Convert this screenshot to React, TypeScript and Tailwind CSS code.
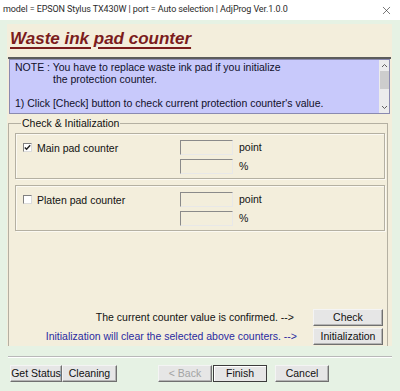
import { X } from "lucide-react";

const font = "font-['Liberation_Sans',Arial,sans-serif]";

function WinButton({ label, width, isDefault, disabled }: { label: string; width: string; isDefault?: boolean; disabled?: boolean }) {
  return (
    <button
      className={`${width} h-[17px] flex items-center justify-center whitespace-nowrap bg-[#e6e6e6] text-[10.5px] leading-none border ${
        isDefault
          ? "border-[#3c3c3c] shadow-[inset_1px_1px_0_#fff]"
          : "border-t-[#f4f4f4] border-l-[#f4f4f4] border-r-[#707070] border-b-[#707070] shadow-[inset_-1px_-1px_0_#b4b4b4]"
      } ${disabled ? "text-[#a3a3a3]" : "text-[#111]"}`}
    >
      {label}
    </button>
  );
}

function Field() {
  return (
    <div className="w-[53px] h-[15px] bg-[#f3eedc] border border-t-[#8a8a8a] border-l-[#8a8a8a] border-r-[#e8e8e8] border-b-[#e8e8e8]" />
  );
}

function CounterBox({ label, checked }: { label: string; checked?: boolean }) {
  return (
    <div className="h-[46px] flex border border-[#b4b0a2] shadow-[inset_1px_1px_0_#fbf9f2,1px_1px_0_#fbf9f2]">
      <div className="w-[164px] flex items-start pt-[8px] pl-[7px] gap-[5px]">
        <div className="w-[9px] h-[9px] mt-[1px] bg-white border border-t-[#808080] border-l-[#808080] border-r-[#dcdcdc] border-b-[#dcdcdc] flex items-center justify-center">
          {checked && (
            <svg width="7" height="7" viewBox="0 0 7 7">
              <path d="M0.8 3.4 L2.6 5.3 L6.2 1.2" fill="none" stroke="#222" strokeWidth="1.4" />
            </svg>
          )}
        </div>
        <span className="text-[10.5px] leading-[12px] text-[#111]">{label}</span>
      </div>
      <div className="flex flex-col gap-[3px] pt-[6px]">
        <div className="flex items-center gap-[6px]">
          <Field />
          <span className="text-[10.5px] text-[#111]">point</span>
        </div>
        <div className="flex items-center gap-[6px]">
          <Field />
          <span className="text-[10.5px] text-[#111]">%</span>
        </div>
      </div>
    </div>
  );
}

export default function App() {
  return (
    <div className={`w-[400px] h-[391px] flex flex-col bg-[#e6f2e4] ${font} overflow-hidden`}>
      <div className="h-[20px] shrink-0 bg-white flex items-center justify-between pl-[3px] pr-[7px]">
        <span className="font-['Roboto',sans-serif] text-[9px] tracking-[-0.1px] text-[#2b2b2b]">
          model = EPSON Stylus TX430W | port = Auto selection | AdjProg Ver.1.0.0
        </span>
        <X size={13} strokeWidth={1.2} color="#333" />
      </div>

      <div className="flex flex-col pt-[4px] px-[7px] pr-[8px]">
        <div className="h-[322px] bg-[#f3eedc] flex flex-col">
          <div className="h-[33px] pl-[3px] pt-[3px]">
            <span className="text-[17px] leading-[20px] font-bold italic text-[#7b1c1c] underline decoration-2 underline-offset-[3px]">
              Waste ink pad counter
            </span>
          </div>
          <div className="h-[2px] mx-[1px] bg-[#5c5c5c]" />
          <div className="h-[55px] mx-[2px] flex border border-[#8a8ab0] bg-[#c8c9fb]">
            <div className="flex-1 pl-[5px] pt-[1px] text-[10.5px] leading-[12px] text-[#10102a]">
              <div>NOTE : You have to replace waste ink pad if you initialize</div>
              <div className="pl-[38px]">the protection counter.</div>
              <div>&nbsp;</div>
              <div>1) Click [Check] button to check current protection counter's value.</div>
            </div>
            <div className="w-[10px] bg-[#ececec] flex flex-col items-center">
              <svg width="7" height="10" viewBox="0 0 7 10" className="mt-[1px]">
                <path d="M1 6 L3.5 3.5 L6 6" fill="none" stroke="#606060" strokeWidth="1" />
              </svg>
              <div className="w-[9px] h-[18px] bg-[#cdcdcd]" />
              <div className="flex-1" />
              <svg width="7" height="10" viewBox="0 0 7 10" className="mb-[1px]">
                <path d="M1 4 L3.5 6.5 L6 4" fill="none" stroke="#606060" strokeWidth="1" />
              </svg>
            </div>
          </div>

          <fieldset className="flex-1 mt-[3px] ml-[1px] mr-[4px] border border-b-0 border-[#b4b0a2] px-[6px] pb-0">
            <legend className="ml-[6px] px-[1px] text-[10.5px] leading-[12px] text-[#111]">Check &amp; Initialization</legend>
            <div className="flex flex-col gap-[6px] mt-[4px] -mr-[4px]">
              <CounterBox label="Main pad counter" checked />
              <CounterBox label="Platen pad counter" />
            </div>
            <div className="flex flex-col items-end gap-[2px] mt-[78px] -mr-[2px] text-[10.5px]">
              <div className="flex items-center gap-[19px]">
                <span className="text-[#111]">The current counter value is confirmed. --&gt;</span>
                <WinButton label="Check" width="w-[70px]" />
              </div>
              <div className="flex items-center gap-[16px]">
                <span className="text-[#2a2aa0]">Initialization will clear the selected above counters. --&gt;</span>
                <WinButton label="Initialization" width="w-[70px]" />
              </div>
            </div>
          </fieldset>
        </div>
      </div>

      <div className="mt-[10px] mx-[8px] h-[2px] border-t border-[#b9b9b9] border-b border-b-white" />

      <div className="flex items-center mt-[7px] pl-[10px]">
        <WinButton label="Get Status" width="w-[52px]" />
        <WinButton label="Cleaning" width="w-[55px]" />
        <div className="w-[41px]" />
        <WinButton label="< Back" width="w-[54px]" disabled />
        <div className="w-[1px]" />
        <WinButton label="Finish" width="w-[54px]" isDefault />
        <div className="w-[8px]" />
        <WinButton label="Cancel" width="w-[54px]" />
      </div>
    </div>
  );
}
